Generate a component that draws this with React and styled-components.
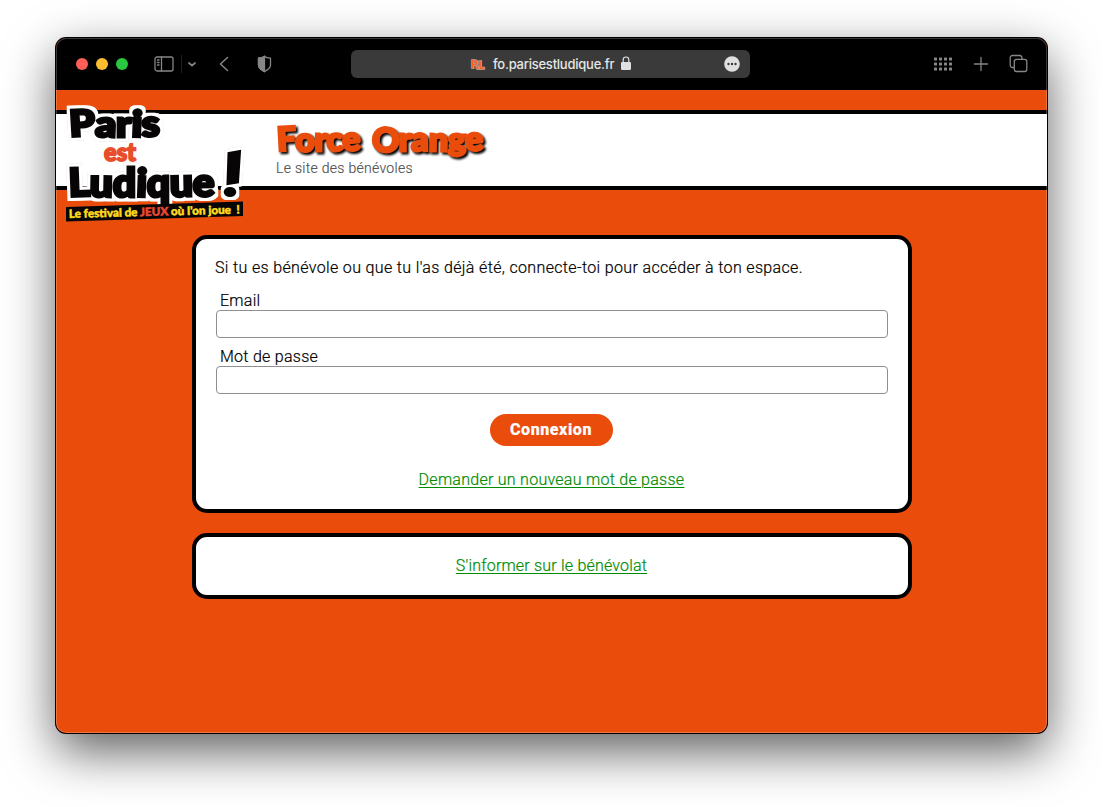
import React from "react";
import styled, { createGlobalStyle } from "styled-components";

const orange = "#ea4d0b";

const GlobalStyle = createGlobalStyle`
  *, *::before, *::after { box-sizing: border-box; }
  html, body { margin: 0; padding: 0; background: #fff; }
  body { font-family: Roboto, "Liberation Sans", Arial, sans-serif; font-weight: 300; font-size: 16px; color: #000; }
`;

const Desktop = styled.div`
  width: 1103px;
  height: 807px;
  padding: 38px 56px 0;
  overflow: hidden;
`;

const BrowserWindow = styled.div`
  position: relative;
  height: 695px;
  border-radius: 10px;
  overflow: hidden;
  display: flex;
  flex-direction: column;
  background: ${orange};
  box-shadow: 0 0 0 1px #000, 0 18px 50px rgba(0, 0, 0, 0.64);

  &::after {
    content: "";
    position: absolute;
    inset: 0;
    border-radius: 10px;
    box-shadow: inset 0 0 0 1px rgba(255, 255, 255, 0.22);
    pointer-events: none;
  }
`;

const Toolbar = styled.div`
  height: 52px;
  flex: none;
  display: flex;
  align-items: center;
  background: #000;
  padding: 0 19px 0 20px;
  color: #868686;
  svg { display: block; flex: none; }
`;

const Side = styled.div`
  display: flex;
  align-items: center;
  flex: none;
  width: ${(p) => p.$width}px;
  justify-content: ${(p) => (p.$end ? "flex-end" : "flex-start")};
  gap: ${(p) => p.$gap || 0}px;
`;

const Light = styled.span`
  width: 12px;
  height: 12px;
  border-radius: 50%;
  margin-right: 8px;
  background: ${(p) => p.$color};
`;

const Divider = styled.span`
  width: 1px;
  height: 18px;
  margin: 0 6px 0 7px;
  background: #1e1e1e;
`;

const AddressBar = styled.div`
  width: 399px;
  height: 28px;
  border-radius: 6px;
  background: #3a3a3a;
  display: flex;
  align-items: center;
  padding: 0 10px 0 119px;
  color: #e6e6e6;
`;

const Url = styled.span`
  font: 500 13px/28px Inter, sans-serif;
  letter-spacing: -0.24px;
  width: 122px;
  margin: 0 6px 0 7px;
  white-space: nowrap;
`;

const Push = styled.span`
  flex: 1;
`;

const Header = styled.header`
  margin-top: 20px;
  height: 80px;
  flex: none;
  display: flex;
  background: #fff;
  border: solid #000;
  border-width: 4px 0;
`;

const LogoSlot = styled.div`
  width: 220px;
  height: 72px;
  svg { display: block; margin: -14px 0 0 6px; overflow: visible; position: relative; }
`;

const Titles = styled.div`
  display: flex;
  flex-direction: column;
  padding-top: 5px;
  svg { display: block; overflow: visible; }
`;

const Tagline = styled.div`
  font-size: 14px;
  line-height: 18px;
  margin-top: 2px;
  letter-spacing: 0.29px;
  color: #4d4d4d;
  -webkit-text-stroke: 0.15px currentColor;
`;

const Main = styled.main`
  display: flex;
  flex-direction: column;
  align-items: center;
  gap: 20px;
  margin-top: 45px;
  -webkit-text-stroke: 0.2px currentColor;
`;

const Card = styled.section`
  width: 720px;
  height: ${(p) => p.$height}px;
  border: 4px solid #000;
  border-radius: 15px;
  background: #fff;
  padding: 19px 20px 0;
  display: flex;
  flex-direction: column;
`;

const Intro = styled.p`
  margin: 0 0 13px -0.5px;
  line-height: 20px;
  letter-spacing: 0.35px;
  white-space: nowrap;
`;

const Field = styled.label`
  display: block;
  height: 56px;
  line-height: 20px;
  letter-spacing: 0.27px;
`;

const FieldName = styled.span`
  display: block;
  height: 19px;
  padding-left: 4.5px;
`;

const Input = styled.input`
  display: block;
  width: 672px;
  height: 28px;
  border: 1px solid #8f8f8f;
  border-radius: 4px;
  background: #fff;
  outline: none;
`;

const Submit = styled.button`
  align-self: center;
  width: 123px;
  height: 32px;
  margin: 11px 0 24px -1px;
  border: 0;
  padding: 0;
  border-radius: 16px;
  background: ${orange};
  color: #fff;
  font: 800 16px/32px Roboto, sans-serif;
  letter-spacing: 0.6px;
  -webkit-text-stroke: 0.2px #fff;
`;

const Link = styled.a`
  align-self: center;
  line-height: 20px;
  letter-spacing: ${(p) => p.$tracking};
  color: #008c00;
  text-decoration: underline;
  text-decoration-thickness: 1px;
  text-underline-offset: 2px;
  white-space: nowrap;
`;

const Lines = ({ w, h, width = 1.3, children, style }) => (
  <svg width={w} height={h} viewBox={`0 0 ${w} ${h}`} fill="none" stroke="currentColor"
    strokeWidth={width} strokeLinecap="round" strokeLinejoin="round" style={style}>
    {children}
  </svg>
);

const display = { fontFamily: "Lato, sans-serif", fontWeight: 900 };

function FestivalLogo() {
  return (
    <svg width="188" height="124" viewBox="0 0 188 124" style={display}>
      <defs>
        <filter id="cutout" x="-10%" y="-10%" width="120%" height="120%" colorInterpolationFilters="sRGB">
          <feMorphology in="SourceAlpha" operator="dilate" radius="3" result="wide" />
          <feGaussianBlur in="wide" stdDeviation=".7" result="edge" />
          <feFlood floodColor="#cfc8c0" floodOpacity=".8" />
          <feComposite in2="edge" operator="in" result="rim" />
          <feFlood floodColor="#fff" />
          <feComposite in2="wide" operator="in" result="paper" />
          <feMerge>
            <feMergeNode in="rim" /><feMergeNode in="paper" /><feMergeNode in="SourceGraphic" />
          </feMerge>
        </filter>
      </defs>
      <g filter="url(#cutout)" fill="#080507" stroke="#080507" strokeWidth="3" strokeLinejoin="miter">
        <text x="8" y="36.500" fontSize="36" textLength="90" lengthAdjust="spacingAndGlyphs" rotate="-3 2 0 2 -2">Paris</text>
        <text x="7" y="96.500" fontSize="39" textLength="146" lengthAdjust="spacingAndGlyphs" rotate="-2 1 0 2 0 -1 -2">Ludique</text>
        <path d="M167 53.500 177.500 51.500 175.500 82 166 83.500Z" strokeWidth="3" />
        <ellipse cx="168" cy="92" rx="4.800" ry="3.500" strokeWidth="3" />
      </g>
      <text x="42" y="61" fontSize="25" textLength="32" lengthAdjust="spacingAndGlyphs"
        fill="#e94e2c" stroke="#e94e2c" strokeWidth="1.8">est</text>
      <path d="M4 107 181 101.500V116L4 121.500Z" fill="#080507" />
      <text x="7" y="118" fontSize="11.500" textLength="171" lengthAdjust="spacingAndGlyphs"
        transform="rotate(-1.500 7 118)" fill="#ffdc1e" stroke="#ffdc1e" strokeWidth=".5">
        Le festival de <tspan fill="#ed4b32" stroke="#ed4b32">JEUX</tspan>{" où l'on joue\u00a0\u00a0!"}
      </text>
    </svg>
  );
}

function SiteTitle() {
  return (
    <svg width="215" height="38" viewBox="0 0 215 38" style={{ ...display, filter: "drop-shadow(2px 2px 1px #000)" }}>
      <g fill={orange} stroke={orange} strokeWidth="2.800" strokeLinejoin="miter" fontSize="33">
        <text x="1.500" y="32" textLength="83.500" lengthAdjust="spacingAndGlyphs" rotate="-3 2 0 -1 -4">Force</text>
        <text x="95.500" y="32" textLength="112.500" lengthAdjust="spacingAndGlyphs" rotate="3 0 -1 1 0 -4">Orange</text>
      </g>
    </svg>
  );
}

export default function App() {
  return (
    <Desktop>
      <GlobalStyle />
      <BrowserWindow>
        <Toolbar>
          <Side $width={275}>
            <Light $color="#ff5f57" />
            <Light $color="#febc2e" />
            <Light $color="#28c840" />
            <Lines w={20} h={16} style={{ marginLeft: 18 }}>
              <rect x="1" y="1" width="18" height="14" rx="2" />
              <path d="M7.500 1v14M3.500 4h1.500M3.500 6.500h1.500M3.500 9h1.500" />
            </Lines>
            <Divider />
            <Lines w={8} h={5} width={1.7}><path d="M1 1l3 2.600L7 1" /></Lines>
            <Lines w={10} h={16} width={1.5} style={{ marginLeft: 23 }}><path d="M8.500 1.500 1.500 8l7 6.500" /></Lines>
            <Lines w={15} h={18} style={{ marginLeft: 28 }}>
              <path d="M7.500 1.200C6 2.500 3.500 3 1.500 3.200V10c0 3 2.800 5 6 6.600 3.200-1.600 6-3.600 6-6.600V3.200c-2-.2-4.500-.7-6-2Z" />
              <path d="M7.500 1.200C6 2.500 3.500 3 1.500 3.200V10c0 3 2.800 5 6 6.600Z" fill="currentColor" />
            </Lines>
          </Side>
          <AddressBar>
            <svg width="16" height="12" viewBox="0 0 16 12" style={display}>
              <g fontSize="11" strokeWidth="1.600" stroke="#c8a090" fill="#f8601c" style={{ paintOrder: "stroke" }}>
                <text x="1" y="9.500">P</text><text x="8.500" y="10.500">L</text><text x="6" y="10.500" fontSize="6">e</text>
              </g>
            </svg>
            <Url>fo.parisestludique.fr</Url>
            <svg width="10" height="14" viewBox="0 0 10 14" style={{ marginTop: -2 }}>
              <rect y="6" width="10" height="8" rx="1.300" fill="#e0e0e0" />
              <path d="M2.200 6.500V3.800a2.800 2.800 0 0 1 5.600 0v2.700" fill="none" stroke="#e0e0e0" strokeWidth="1.200" />
            </svg>
            <Push />
            <svg width="16" height="16" viewBox="0 0 16 16" style={{ marginTop: -1 }}>
              <circle cx="8" cy="8" r="7.800" fill="#e0e0e0" />
              <g fill="#3a3a3a"><circle cx="4.500" cy="8" r="1.200" /><circle cx="8" cy="8" r="1.200" /><circle cx="11.500" cy="8" r="1.200" /></g>
            </svg>
          </AddressBar>
          <Push />
          <Side $end $gap={21}>
            <svg width="18" height="14" viewBox="0 0 18 14" fill="currentColor">
              {[0, 5, 10].map((y) => [0, 5, 10, 15].map((x) => (
                <rect key={`${x}-${y}`} x={x} y={y + 0.5} width="3" height="3" rx=".6" />
              )))}
            </svg>
            <Lines w={16} h={16} style={{ marginTop: -1, marginRight: -1 }}><path d="M8 1.500v13M1.500 8h13" /></Lines>
            <Lines w={19} h={19} style={{ marginTop: -1 }}>
              <path d="M4.500 13.500H3.400A2.200 2.200 0 0 1 1.200 11.300V3.700a2.200 2.200 0 0 1 2.200-2.200h7.400A2.200 2.200 0 0 1 13 3.700v1.500" />
              <rect x="5.300" y="5.300" width="12.500" height="12.200" rx="2.200" />
            </Lines>
          </Side>
        </Toolbar>
        <Header>
          <LogoSlot><FestivalLogo /></LogoSlot>
          <Titles>
            <SiteTitle />
            <Tagline>Le site des bénévoles</Tagline>
          </Titles>
        </Header>
        <Main>
          <Card $height={278}>
            <Intro>Si tu es bénévole ou que tu l'as déjà été, connecte-toi pour accéder à ton espace.</Intro>
            <Field><FieldName>Email</FieldName><Input type="email" /></Field>
            <Field><FieldName>Mot de passe</FieldName><Input type="password" /></Field>
            <Submit>Connexion</Submit>
            <Link $tracking="0.27px">Demander un nouveau mot de passe</Link>
          </Card>
          <Card $height={66}>
            <Link $tracking="0.2px">S'informer sur le bénévolat</Link>
          </Card>
        </Main>
      </BrowserWindow>
    </Desktop>
  );
}
